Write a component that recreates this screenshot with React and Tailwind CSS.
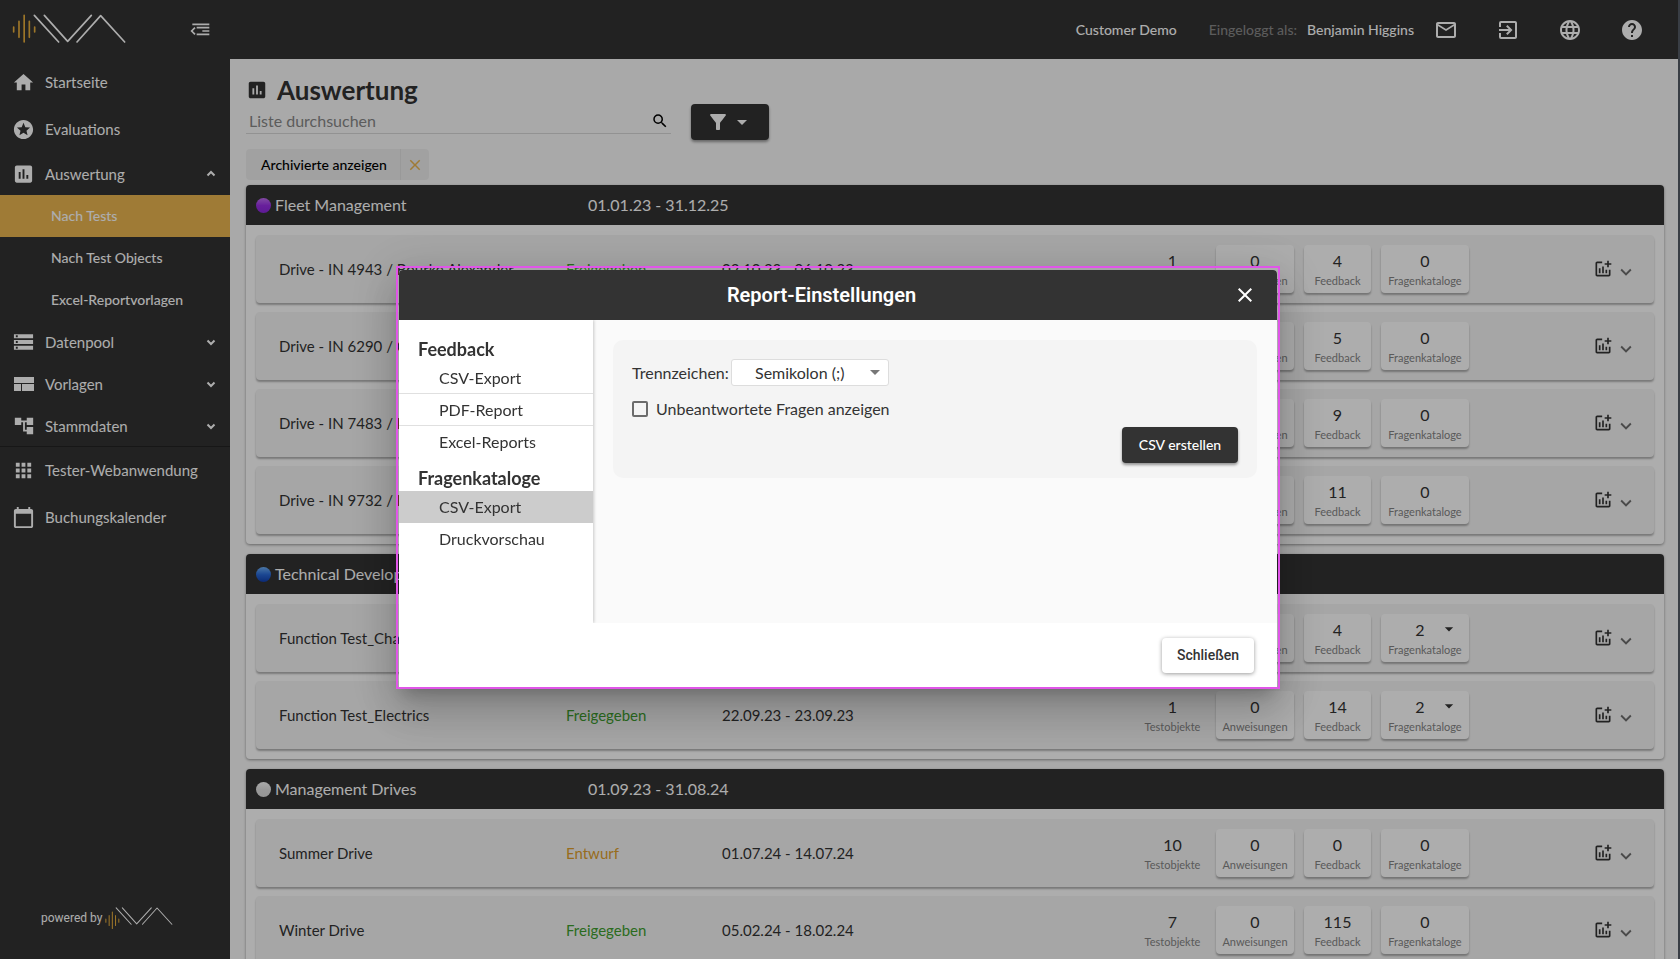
import React, { useState } from 'react';
import {
  MdAccountTree,
  MdApps,
  MdArrowDropDown,
  MdAssessment,
  MdCalendarToday,
  MdClose,
  MdExitToApp,
  MdFilterAlt,
  MdHelp,
  MdHome,
  MdKeyboardArrowDown,
  MdLanguage,
  MdMailOutline,
  MdOutlineAddchart,
  MdSearch,
  MdStars,
  MdStorage,
} from 'react-icons/md';

const GROUPS = [
  {
    name: 'Fleet Management',
    dates: '01.01.23 - 31.12.25',
    dot: 'bg-linear-to-b from-[#c06bf0] via-[#9a2ee6] to-[#8a28dc]',
    rows: [
      { name: 'Drive - IN 4943 / Bourke Alexander', status: 'Freigegeben', dates: '02.10.23 - 06.10.23', counts: [1, 0, 4, 0] },
      { name: 'Drive - IN 6290 / Clarke Oliver', status: 'Freigegeben', dates: '02.10.23 - 06.10.23', counts: [1, 0, 5, 0] },
      { name: 'Drive - IN 7483 / Ellis Martin', status: 'Freigegeben', dates: '02.10.23 - 06.10.23', counts: [1, 0, 9, 0] },
      { name: 'Drive - IN 9732 / Evans Peter', status: 'Freigegeben', dates: '02.10.23 - 06.10.23', counts: [1, 0, 11, 0] },
    ],
  },
  {
    name: 'Technical Development',
    dates: '01.09.23 - 31.12.23',
    dot: 'bg-linear-to-b from-[#6fb0f5] via-[#2a6ad8] to-[#123fae]',
    rows: [
      { name: 'Function Test_Chassis', status: 'Freigegeben', dates: '22.09.23 - 23.09.23', counts: [1, 0, 4, 2] },
      { name: 'Function Test_Electrics', status: 'Freigegeben', dates: '22.09.23 - 23.09.23', counts: [1, 0, 14, 2] },
    ],
  },
  {
    name: 'Management Drives',
    dates: '01.09.23 - 31.08.24',
    dot: 'bg-linear-to-b from-[#fafafa] via-[#e2e2e2] to-[#dcdcdc]',
    rows: [
      { name: 'Summer Drive', status: 'Entwurf', dates: '01.07.24 - 14.07.24', counts: [10, 0, 0, 0] },
      { name: 'Winter Drive', status: 'Freigegeben', dates: '05.02.24 - 18.02.24', counts: [7, 0, 115, 0] },
    ],
  },
];

const Logo = ({ className, small = false }) => (
  <svg viewBox={small ? '36 42 342 107' : '36 42 342 90'} className={className} fill="none" strokeLinecap="round" aria-label="IVA">
    <g stroke="#e8ae3c" strokeWidth="5" transform={small ? 'translate(0 20)' : undefined}>
      <path d="M41 81v15M57 64v48M72.500 46v80M88 64v48M104 81v15" />
    </g>
    <g stroke="#fff" strokeWidth="5" strokeLinejoin="round" transform={small ? 'translate(-12 0)' : undefined}>
      <path d="M103 46l73 80M133 46l70 78 71-78M231 126l71-79 72 79" />
    </g>
  </svg>
);

const CollapseIcon = () => (
  <svg width="20" height="14" viewBox="0 0 60 42" fill="none" stroke="currentColor" strokeWidth="5">
    <path d="M7 7h51M20 17h38M37 27h21M20 37h38" />
    <path d="M15 17L5 27l10 10" />
  </svg>
);

const LayoutIcon = () => (
  <svg width="20" height="14" viewBox="0 0 20 14" fill="currentColor">
    <path d="M0 0h20v6H0zM0 7h7v7H0zM8 7h12v7H8z" />
  </svg>
);

const Chevron = ({ up = false }) => (
  <svg width="10" height="8" viewBox="0 0 10 8" fill="none" stroke="currentColor" strokeWidth="2">
    <path d={up ? 'M1.500 5.500L5 2l3.500 3.500' : 'M1.500 2.500L5 6l3.500-3.500'} />
  </svg>
);

const NavItem = ({ icon, label, tall = false, chevron }) => (
  <a href="#" className={`flex items-center pl-3 pr-[14px] text-[15px] text-white ${tall ? 'h-[47px]' : 'h-[42px]'}`}>
    <span className="flex w-[23px] justify-center">{icon}</span>
    <span className="ml-[10px] flex-1">{label}</span>
    {chevron && <Chevron up={chevron === 'up'} />}
  </a>
);

const SubItem = ({ label, active = false }) => (
  <a href="#" className={`flex h-[42px] items-center pl-[51px] text-sm font-medium text-white ${active ? 'bg-[#ebb650]' : ''}`}>
    {label}
  </a>
);

const Sidebar = () => (
  <aside className="flex w-[230px] shrink-0 flex-col bg-[#333]">
    <div className="flex h-[59px] items-center justify-between pb-[1px] pl-3 pr-5">
      <Logo className="h-[30px] w-[114px]" />
      <button type="button" aria-label="Menü einklappen" className="text-white">
        <CollapseIcon />
      </button>
    </div>
    <nav>
      <NavItem tall icon={<MdHome size={23} />} label="Startseite" />
      <NavItem tall icon={<MdStars size={23} />} label="Evaluations" />
      <NavItem icon={<MdAssessment size={24} />} label="Auswertung" chevron="up" />
      <SubItem label="Nach Tests" active />
      <SubItem label="Nach Test Objects" />
      <SubItem label="Excel-Reportvorlagen" />
      <NavItem icon={<MdStorage size={24} />} label="Datenpool" chevron="down" />
      <NavItem icon={<LayoutIcon />} label="Vorlagen" chevron="down" />
      <NavItem icon={<MdAccountTree size={22} />} label="Stammdaten" chevron="down" />
      <div className="shadow-[0_-1px_0_#222]">
        <NavItem tall icon={<MdApps size={25} />} label="Tester-Webanwendung" />
        <NavItem tall icon={<MdCalendarToday size={23} />} label="Buchungskalender" />
      </div>
    </nav>
    <div className="mt-auto flex items-center gap-[2px] pb-[30px] pl-[41px] text-white">
      <span className="font-[Roboto,sans-serif] text-xs">powered by</span>
      <Logo small className="h-[22px] w-[72px]" />
    </div>
  </aside>
);

const TopBar = () => (
  <header className="flex h-[59px] shrink-0 items-center justify-end bg-[#333] pr-[34px] text-sm font-medium text-white">
    <span>Customer Demo</span>
    <span className="ml-8 text-[#888]">Eingeloggt als:</span>
    <span className="ml-[10px]">Benjamin Higgins</span>
    <div className="ml-5 flex items-center gap-[38px]">
      <button type="button" aria-label="Nachrichten"><MdMailOutline size={24} /></button>
      <button type="button" aria-label="Abmelden"><MdExitToApp size={24} /></button>
      <button type="button" aria-label="Sprache"><MdLanguage size={24} /></button>
      <button type="button" aria-label="Hilfe"><MdHelp size={24} /></button>
    </div>
  </header>
);

const Stat = ({ value, label, width, plain = false, caret = false }) => {
  const Tag = plain ? 'div' : 'button';
  return (
    <Tag
      type={plain ? undefined : 'button'}
      className={`relative flex h-12 flex-col items-center justify-center rounded pt-1 ${width} ${plain ? '' : 'bg-white shadow-[0_2px_2px_rgba(0,0,0,0.3)]'}`}
    >
      <span className={`text-base leading-5 ${caret ? 'pr-[10px]' : ''}`}>{value}</span>
      <span className="text-[11px] leading-5 text-[#858585]">{label}</span>
      {caret && <MdArrowDropDown size={20} className="absolute right-[10px] top-[5px]" />}
    </Tag>
  );
};

const TestRow = ({ row }) => {
  const [objects, instructions, feedback, catalogs] = row.counts;
  return (
    <li className="flex h-[68px] items-center rounded bg-[#f5f5f5] pl-[23px] pr-[17px] text-[15px] shadow-[0_2px_2px_rgba(0,0,0,0.3)]">
      <span className="w-[287px] truncate">{row.name}</span>
      <span className={`w-[156px] ${row.status === 'Entwurf' ? 'text-[#e0a02c]' : 'text-[#3f9f2e]'}`}>{row.status}</span>
      <span>{row.dates}</span>
      <div className="ml-auto flex gap-[10px]">
        <Stat plain value={objects} label="Testobjekte" width="w-[67px]" />
        <Stat value={instructions} label="Anweisungen" width="w-[78px]" />
        <Stat value={feedback} label="Feedback" width="w-[67px]" />
        <Stat value={catalogs} label="Fragenkataloge" width="w-[88px]" caret={catalogs > 0} />
      </div>
      <button type="button" aria-label="Report erstellen" className="ml-[124px]"><MdOutlineAddchart size={20} /></button>
      <button type="button" aria-label="Details anzeigen" className="ml-[2px] mt-[6px] text-[#6e6e6e]"><MdKeyboardArrowDown size={22} /></button>
    </li>
  );
};

const Group = ({ group }) => (
  <section className="mb-[10px] rounded bg-white shadow-[0_1px_3px_rgba(0,0,0,0.4)]">
    <h2 className="flex h-10 items-center rounded-t bg-[#333] pl-[10px] text-base text-white">
      <span className={`h-[15px] w-[15px] rounded-full ${group.dot}`} />
      <span className="ml-1 w-[313px]">{group.name}</span>
      <span>{group.dates}</span>
    </h2>
    <ul className="flex flex-col gap-[9px] p-[10px]">
      {group.rows.map((row) => (
        <TestRow key={row.name} row={row} />
      ))}
    </ul>
  </section>
);

const MenuItem = ({ label, active = false, line = false }) => (
  <button
    type="button"
    className={`flex h-8 w-full items-center pl-10 text-base ${active ? 'bg-[#ccc]' : ''} ${line ? 'border-b border-[#e0e0e0]' : ''}`}
  >
    {label}
  </button>
);

const ReportDialog = () => {
  const [separator, setSeparator] = useState('semicolon');
  const [showUnanswered, setShowUnanswered] = useState(false);

  return (
    <div className="fixed inset-0 flex items-center justify-center bg-black/32 pb-1 pr-1">
      <div className="w-[884px] border-2 border-[#e055e8] px-px pt-[2px] shadow-[0_11px_15px_-7px_rgba(0,0,0,0.2),0_24px_38px_3px_rgba(0,0,0,0.14),0_9px_46px_8px_rgba(0,0,0,0.12)]">
        <div role="dialog" aria-label="Report-Einstellungen" className="rounded-t bg-white">
          <div className="flex h-[50px] items-center rounded-t bg-[#333] pr-5 text-white">
            <h2 className="flex-1 pl-[11px] text-center font-[Roboto,sans-serif] text-xl font-semibold">Report-Einstellungen</h2>
            <button type="button" aria-label="Dialog schließen"><MdClose size={24} /></button>
          </div>

          <div className="flex h-[303px] overflow-hidden">
            <nav className="z-10 w-[194px] shrink-0 bg-white pt-[17px] shadow-[1px_0_3px_rgba(0,0,0,0.2)]">
              <h3 className="h-[25px] pl-[19px] text-lg leading-[25px] font-bold">Feedback</h3>
              <MenuItem label="CSV-Export" line />
              <MenuItem label="PDF-Report" line />
              <MenuItem label="Excel-Reports" />
              <h3 className="mt-2 h-[25px] pl-[19px] text-lg leading-[25px] font-bold">Fragenkataloge</h3>
              <MenuItem label="CSV-Export" active />
              <MenuItem label="Druckvorschau" />
            </nav>

            <div className="flex-1 bg-[#fafafa] p-5">
              <form className="rounded-[10px] bg-[#f4f4f4] px-[19px] pb-[15px] pt-[19px] text-base" onSubmit={(e) => e.preventDefault()}>
                <div className="flex items-center">
                  <label htmlFor="separator" className="w-[99px]">Trennzeichen:</label>
                  <div className="relative">
                    <select
                      id="separator"
                      value={separator}
                      onChange={(e) => setSeparator(e.target.value)}
                      className="block h-[27px] w-[158px] appearance-none rounded-[3px] border border-[#ddd] bg-white pl-[23px]"
                    >
                      <option value="semicolon">Semikolon (;)</option>
                      <option value="comma">Komma (,)</option>
                    </select>
                    <MdArrowDropDown size={24} className="pointer-events-none absolute right-[2px] top-[1px] text-[#777]" />
                  </div>
                </div>
                <label className="mt-[11px] flex h-6 items-center gap-2">
                  <input
                    type="checkbox"
                    checked={showUnanswered}
                    onChange={(e) => setShowUnanswered(e.target.checked)}
                    className="h-4 w-4 appearance-none rounded-[2px] border-2 border-[#6b6b6b] checked:bg-[#333]"
                  />
                  Unbeantwortete Fragen anzeigen
                </label>
                <div className="mt-[6px] flex justify-end">
                  <button type="submit" className="h-9 w-[116px] rounded bg-[#333] text-sm font-medium text-white shadow-[0_2px_3px_rgba(0,0,0,0.4)]">
                    CSV erstellen
                  </button>
                </div>
              </form>
            </div>
          </div>

          <div className="flex h-[64px] items-center justify-end pr-[23px]">
            <button type="button" className="h-[35px] w-[92px] rounded bg-white font-[Roboto,sans-serif] text-sm font-medium shadow-[0_1px_4px_rgba(0,0,0,0.4)]">
              Schließen
            </button>
          </div>
        </div>
      </div>
    </div>
  );
};

export default function App() {
  return (
    <div className="flex h-screen overflow-hidden border-r-2 border-[#555c66] bg-[#fafafa] font-[Lato,'Open_Sans',sans-serif] text-[#333]">
      <Sidebar />
      <div className="flex min-w-0 flex-1 flex-col">
        <TopBar />
        <main className="flex-1 overflow-hidden px-4 pr-[14px]">
          <div className="flex">
            <div className="w-[425px]">
              <h1 className="mt-4 flex h-[30px] items-center text-[26px] font-bold">
                <MdAssessment size={22} />
                <span className="ml-[9px]">Auswertung</span>
              </h1>
              <div className="flex h-[29px] items-center border-b border-[#d8d8d8] pr-[2px] pt-1">
                <input
                  type="text"
                  aria-label="Liste durchsuchen"
                  placeholder="Liste durchsuchen"
                  className="flex-1 bg-transparent pl-[3px] text-base outline-none placeholder:text-[#888]"
                />
                <MdSearch size={18} className="text-black" />
              </div>
            </div>
            <button type="button" aria-label="Filter" className="ml-5 mt-[45px] flex h-9 w-[78px] items-center justify-center rounded bg-[#333] text-white shadow-[0_2px_3px_rgba(0,0,0,0.4)]">
              <MdFilterAlt size={24} />
              <MdArrowDropDown size={24} />
            </button>
          </div>
          <div className="mb-[5px] mt-[9px] flex h-[31px] w-fit items-center rounded bg-[#eee] text-sm font-medium text-black">
            <span className="w-[154px] pl-[15px]">Archivierte anzeigen</span>
            <button type="button" aria-label="Filter entfernen" className="flex h-full w-[29px] items-center justify-center border-l border-[#e2e2e2] text-[#ebb650]">
              <MdClose size={18} />
            </button>
          </div>
          {GROUPS.map((group) => (
            <Group key={group.name} group={group} />
          ))}
        </main>
      </div>
      <ReportDialog />
    </div>
  );
}
